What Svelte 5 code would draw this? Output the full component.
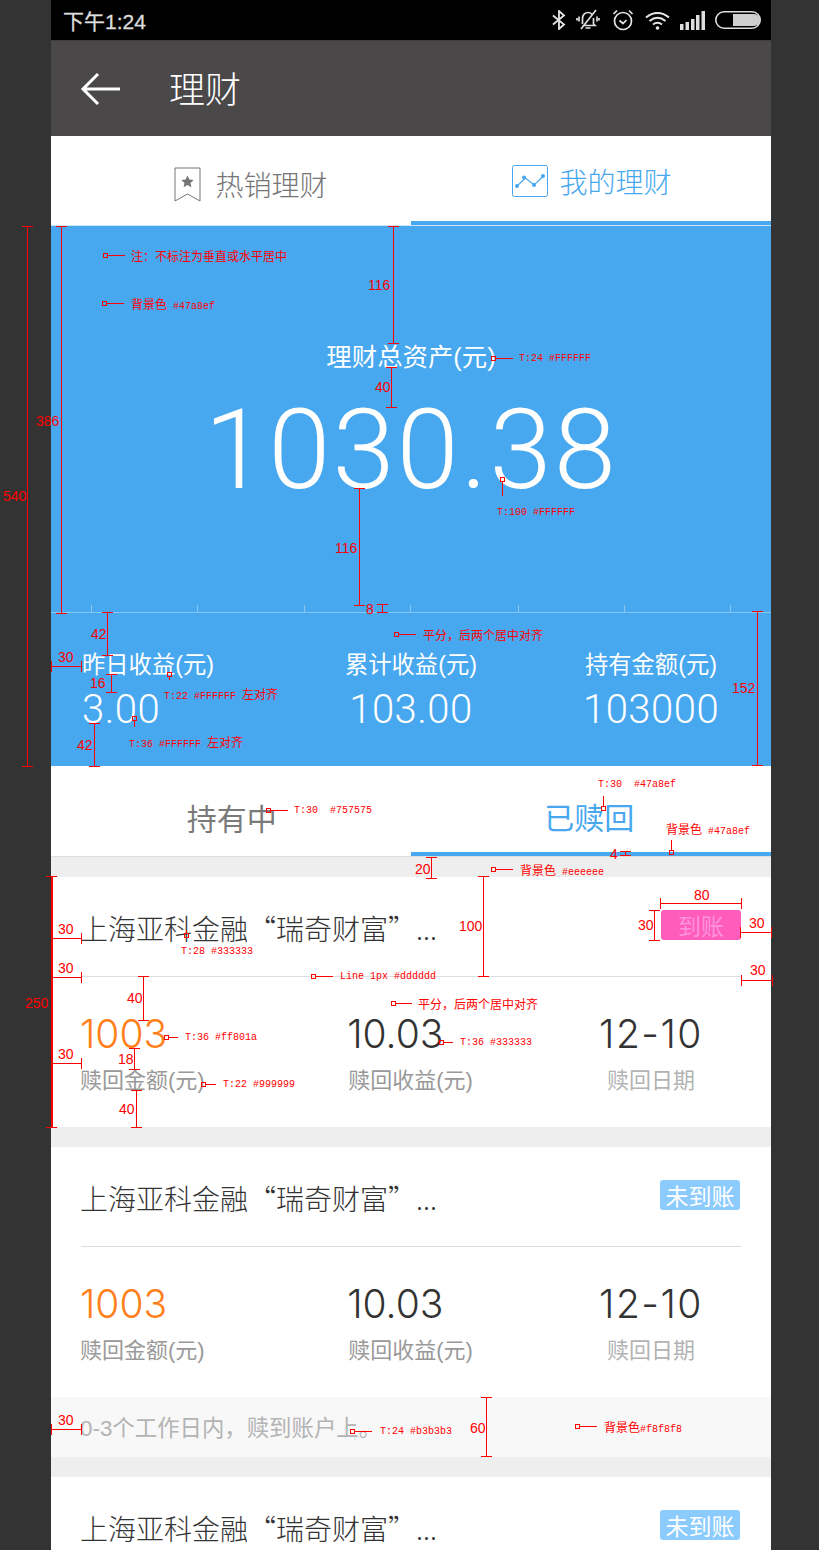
<script>
  const vdims = [
    [27,226,766,'540',3,496],[61,226,613,'386',36,421],[393,226,343,'116',368,285],[391,367,407,'40',375,387],
    [359,488,605,'116',335,548],[382,604,612,'8',366,609],[107,612,655,'42',91,634],[111,674,692,'16',90,683],
    [94,723,766,'42',77,745],[757,611,765,'152',732,688],[625,851,855,'4',610,854],[431,857,878,'20',415,869],
    [483,876,976,'100',459,926],[51,876,1127,'250',25,1003],[654,910,940,'30',638,925],[143,976,1020,'40',127,998],
    [134,1048,1069,'18',118,1059],[136,1090,1127,'40',119,1109],[486,1397,1456,'60',470,1428]
  ];
  const hdims = [
    [51,81,666,'30',58,657],[660,741,903,'80',694,895],[740,771,932,'30',749,923],[741,772,980,'30',750,970],
    [51,81,938,'30',58,929],[51,81,977,'30',58,968],[51,81,1063,'30',58,1054],[51,81,1429,'30',58,1420]
  ];
  // marker x, marker y, leader: [x1,y1,x2,y2], text, text x, text y
  const notes = [
    [105,255,[107,255,125,255],'注：不标注为垂直或水平居中',131,255],
    [104,303,[106,303,124,303],'背景色 #47a8ef',131,303],
    [493,358,[495,358,513,358],'T:24 #FFFFFF',519,358],
    [502,479,[502,481,502,496],'T:100 #FFFFFF',497,512],
    [396,634,[398,634,416,634],'平分，后两个居中对齐',423,634],
    [169,674,[169,676,169,680],'T:22 #FFFFFF 左对齐',164,693],
    [134,718,[134,720,134,727],'T:36 #FFFFFF 左对齐',129,741],
    [268,810,[270,810,288,810],'T:30  #757575',294,810],
    [603,808,[603,796,603,806],'T:30  #47a8ef',598,784],
    [671,852,[671,840,671,850],'背景色 #47a8ef',666,828],
    [493,869,[495,869,513,869],'背景色 #eeeeee',520,869],
    [186,935,[186,930,186,933],'T:28 #333333',181,951],
    [313,976,[315,976,333,976],'Line 1px #dddddd',340,976],
    [393,1003,[395,1003,412,1003],'平分，后两个居中对齐',418,1003],
    [166,1037,[168,1037,178,1037],'T:36 #ff801a',185,1037],
    [441,1042,[443,1042,453,1042],'T:36 #333333',460,1042],
    [203,1084,[205,1084,216,1084],'T:22 #999999',223,1084],
    [352,1431,[354,1431,372,1431],'T:24 #b3b3b3',380,1431],
    [577,1426,[579,1426,597,1426],'背景色#f8f8f8',604,1426]
  ];
  const ticks = [40,146,253,359,467,573,679];
  const stats = [['昨日收益(元)','3.00'],['累计收益(元)','103.00'],['持有金额(元)','103000']];
  const box = (x,y,w,h) => `left:${x}px;top:${y}px;width:${w}px;height:${h}px`;
  const at = (x,y) => `left:${x}px;top:${y-7}px`;
  const atn = (x,y) => `left:${x}px;top:${y-8}px`;
  const parts = (t) => t.split(/([\u4e00-\u9fff，：]+)/).filter(Boolean);
  const isCjk = (t) => /[\u4e00-\u9fff，：]/.test(t);
</script>

<div class="stage">
  <div class="phone">
    <header class="status">
      <span class="time">下午1:24</span>
      <div class="sicons">
        <svg width="14" height="20" viewBox="0 0 14 20" fill="none" stroke="#e6e6e6" stroke-width="1.8"><path d="M1 5.500 12 14.500 7 19V1l5 4.500L1 14.500"/></svg>
        <svg class="bell" width="24" height="22" viewBox="0 0 24 22" fill="none" stroke="#e0e0e0" stroke-width="1.7"><path d="M6.500 15V9.500C6.500 6 9 3.500 12 3.500c1.500 0 3 .6 4 1.700M17.500 9v6l1.500 1.500H6.500M9.500 19h5M3 7.500v5M1 9v2.500M21 7.500v5M23 9v2.500M5 20 20 1"/></svg>
        <svg class="alarm" width="22" height="22" viewBox="0 0 22 22" fill="none" stroke="#e6e6e6" stroke-width="1.7"><circle cx="11" cy="12" r="8.500"/><path d="M7.500 11.500 11 14.500l3.500-3.500M1.500 5 5 1.500M20.500 5 17 1.500"/></svg>
        <svg width="25" height="19" viewBox="0 0 25 19" fill="none" stroke="#e8e8e8" stroke-width="2"><path d="M1 6.500C8 .5 17 .5 24 6.500M4.500 10C9.500 6 15.500 6 20.500 10M8 13.500c3-2.300 6-2.300 9 0"/><circle cx="12.500" cy="17" r="1.800" fill="#e8e8e8" stroke="none"/></svg>
        <svg width="25" height="19" viewBox="0 0 25 19" fill="#dedede"><rect x="0" y="13" width="3.500" height="6"/><rect x="5.500" y="11" width="3.500" height="8"/><rect x="11" y="8" width="3.500" height="11"/><rect x="16" y="4" width="3.500" height="15"/><rect x="21.500" y="0" width="3.500" height="19"/></svg>
        <svg width="46" height="18" viewBox="0 0 46 18" fill="none"><rect x=".8" y=".8" width="44.400" height="16.400" rx="8.200" stroke="#dedede" stroke-width="1.600"/><path d="M18 3h21a6 6 0 0 1 0 12H18z" fill="#cfcfcf"/></svg>
      </div>
    </header>

    <nav class="topbar">
      <svg class="back" width="42" height="34" viewBox="0 0 42 34" fill="none" stroke="#fff" stroke-width="3"><path d="M40 17H3M18 2 3 17l15 15"/></svg>
      <span class="navtitle">理财</span>
    </nav>

    <div class="tabs">
      <div class="tab hot">
        <svg width="27" height="35" viewBox="0 0 27 35" fill="none" stroke="#757575" stroke-width="1"><path d="M1 1h25v33l-12.500-7L1 34z"/><path d="m13.500 8.500 1.900 4 4.300.5-3.200 2.900.9 4.300-3.900-2.200-3.900 2.200.9-4.300L7.300 13l4.300-.5z" fill="#757575" stroke="none"/></svg>
        <span>热销理财</span>
      </div>
      <div class="tab mine">
        <svg width="37" height="33" viewBox="0 0 37 33" fill="none" stroke="#47a8ef"><rect x=".5" y=".5" width="35" height="31" rx="2"/><path d="m5 21 8.500-8 8.500 7 9-8.500" stroke-width="1.200"/><g fill="#47a8ef" stroke="none"><circle cx="5" cy="21" r="2"/><circle cx="12" cy="12.500" r="2"/><circle cx="22" cy="20" r="2"/><circle cx="31" cy="11" r="2"/></g></svg>
        <span>我的理财</span>
      </div>
    </div>

    <section class="hero">
      <p class="herolabel">理财总资产(元)</p>
      <p class="heronum">1030.38</p>
    </section>

    <section class="stats">
      {#each ticks as t}<i class="tick" style="left:{t}px"></i>{/each}
      {#each stats as s, i}
        <div class="stat" class:first={i === 0}>
          <span class="slabel">{s[0]}</span>
          <span class="snum">{s[1]}</span>
        </div>
      {/each}
    </section>

    <div class="subtabs">
      <div class="sub off">持有中</div>
      <div class="sub on">已赎回</div>
    </div>

    <div class="gap"></div>

    <article class="card">
      <div class="cardhead">
        <span class="ctitle">上海亚科金融“瑞奇财富”...</span>
        <span class="badge pink">到账</span>
      </div>
      <div class="cells">
        <div class="cell c1"><b class="orange">1003</b><span>赎回金额(元)</span></div>
        <div class="cell c2"><b>10.03</b><span>赎回收益(元)</span></div>
        <div class="cell c3"><b>12-10</b><span class="lite">赎回日期</span></div>
      </div>
    </article>

    <div class="gap"></div>

    <article class="card">
      <div class="cardhead">
        <span class="ctitle">上海亚科金融“瑞奇财富”...</span>
        <span class="badge sky">未到账</span>
      </div>
      <div class="cells">
        <div class="cell c1"><b class="orange">1003</b><span>赎回金额(元)</span></div>
        <div class="cell c2"><b>10.03</b><span>赎回收益(元)</span></div>
        <div class="cell c3"><b>12-10</b><span class="lite">赎回日期</span></div>
      </div>
    </article>
    <div class="tip">0-3个工作日内，赎到账户上。</div>

    <div class="gap"></div>

    <article class="card">
      <div class="cardhead">
        <span class="ctitle">上海亚科金融“瑞奇财富”...</span>
        <span class="badge sky">未到账</span>
      </div>
    </article>
  </div>

  <div class="marks">
    {#each vdims as d}
      <i class="ln" style={box(d[0],d[1],d[3] === '250' ? 2 : 1,d[2]-d[1])}></i>
      <i class="ln" style={box(d[0]-5,d[1],11,1)}></i>
      <i class="ln" style={box(d[0]-5,d[2],11,1)}></i>
      <span class="num" style={atn(d[4],d[5])}>{d[3]}</span>
    {/each}
    {#each hdims as d}
      <i class="ln" style={box(d[0],d[2],d[1]-d[0],1)}></i>
      <i class="ln" style={box(d[0],d[2]-5,1,11)}></i>
      <i class="ln" style={box(d[1],d[2]-5,1,11)}></i>
      <span class="num" style={atn(d[4],d[5])}>{d[3]}</span>
    {/each}
    {#each notes as n}
      <i class="mk" style={box(n[0]-2,n[1]-2,3,3)}></i>
      <i class="ln" style={box(n[2][0],n[2][1],Math.max(n[2][2]-n[2][0],1),Math.max(n[2][3]-n[2][1],1))}></i>
      <span class="note" style={at(n[4],n[5])}>{#each parts(n[3]) as p}<span class:cjk={isCjk(p)}>{p}</span>{/each}</span>
    {/each}
  </div>
</div>

<style>
  :global(body) { margin: 0; background: #333; }
  .stage {
    position: relative; width: 819px; height: 1550px; overflow: hidden;
    background: #333; padding-left: 51px; box-sizing: border-box;
    font-family: "Liberation Sans", "Noto Sans CJK SC", sans-serif;
  }
  .phone { width: 720px; background: #fff; }
  p { margin: 0; }

  .status { height: 40px; background: #000; display: flex; align-items: center; justify-content: space-between; padding: 0 10px 0 12px; }
  .time { color: #ddd; font-size: 21px; -webkit-text-stroke: .3px #ddd; margin-top: -1px; }
  .sicons { display: flex; align-items: center; gap: 10px; }
  .bell { margin-right: 2px; }
  .alarm { margin-right: 1px; }

  .topbar { height: 96px; background: #4a4849; display: flex; align-items: center; padding-left: 30px; box-sizing: border-box; border-top: 1px solid #3f3d3e; }
  .back { margin-right: 48px; margin-left: -1px; }
  .navtitle { color: #fff; font-size: 36px; font-family: "Noto Sans CJK SC", sans-serif; font-weight: 300; margin: -3px 0 0 -1px; }

  .tabs { display: flex; height: 89px; }
  .tab { flex: 0 0 360px; display: flex; align-items: center; justify-content: center; font-size: 28px; font-family: "Noto Sans CJK SC", sans-serif; font-weight: 300; box-sizing: border-box; }
  .hot { color: #757575; gap: 14px; padding: 7px 0 0 40px; }
  .hot svg { margin-top: 1px; }
  .mine { color: #47a8ef; gap: 10px; border-bottom: 4px solid #47a8ef; padding: 4px 0 0 2px; }
  .mine svg { margin-top: 1px; }

  .hero { background: #47a8ef; border-top: 1px solid #cbe4f9; height: 387px; box-sizing: border-box; color: #fff; text-align: center; padding-top: 114px; }
  .herolabel { font-size: 25.400px; line-height: 34px; }
  .heronum { font-family: Roboto, sans-serif; font-weight: 300; font-size: 112px; line-height: 120px; margin-top: 16px; letter-spacing: 2px; }

  .stats { position: relative; background: #47a8ef; border-top: 1px solid #88c6f4; height: 154px; box-sizing: border-box; display: grid; grid-template-columns: repeat(3, 240px); color: #fff; padding-top: 37px; }
  .tick { position: absolute; top: -8px; width: 1px; height: 7px; background: #88c6f4; }
  .stat { display: flex; flex-direction: column; align-items: center; }
  .stat.first { align-items: flex-start; padding-left: 31px; }
  .slabel { font-size: 23.300px; line-height: 30px; }
  .snum { font-family: Roboto, sans-serif; font-weight: 300; font-size: 40px; line-height: 46px; margin-top: 7px; letter-spacing: .5px; }

  .subtabs { display: flex; height: 91px; box-sizing: border-box; border-bottom: 1px solid #ddd; }
  .sub { flex: 1; height: 90px; box-sizing: border-box; display: flex; align-items: center; justify-content: center; font-size: 30px; }
  .off { color: #7a7a7a; padding: 12px 0 0 2px; }
  .on { color: #47a8ef; border-bottom: 4px solid #47a8ef; padding: 13px 3px 0 0; }

  .gap { height: 20px; background: #eee; }

  .card { background: #fff; padding: 0 30px; }
  .cardhead { height: 99px; display: flex; justify-content: space-between; align-items: center; border-bottom: 1px solid #ddd; }
  .ctitle { font-family: "Noto Sans CJK SC", sans-serif; font-weight: 300; font-size: 28px; color: #333; margin: 2px 0 0 -1px; }
  .badge { width: 80px; height: 30px; border-radius: 3px; display: flex; align-items: center; justify-content: center; }
  .pink { background: #ff5cbb; color: #ff93dc; font-size: 23px; margin-top: -3px; }
  .sky { background: #8ccbfd; color: #fff; font-size: 23px; margin: -3px 1px 0 0; }

  .cells { height: 150px; display: grid; grid-template-columns: 210px 240px 240px; margin-right: -30px; padding-top: 34px; box-sizing: border-box; }
  .cell { display: flex; flex-direction: column; }
  .c1 { align-items: flex-start; }
  .c2 { justify-self: center; align-items: flex-start; }
  .c3 { align-items: center; }
  .cell b { font-family: Inter, sans-serif; font-weight: 300; font-size: 39px; line-height: 46px; color: #333; }
  .c1 b { margin-left: -1px; }
  .c2 b { margin-left: -2px; }
  .c3 b { letter-spacing: 1.500px; }
  .cell b.orange { color: #ff801a; }
  .cell span { font-size: 22px; line-height: 30px; color: #999; margin: 9px 0 0 -1px; }
  .cell span.lite { color: #b3b3b3; margin-left: 0; }

  .tip { height: 60px; background: #f8f8f8; color: #b3b3b3; font-size: 22.400px; line-height: 64px; padding-left: 29px; }

  .marks { position: absolute; inset: 0; pointer-events: none; }
  .ln { position: absolute; background: #f00; }
  .mk { position: absolute; border: 1px solid #f00; }
  .num, .note { position: absolute; color: #f00; line-height: 16px; white-space: pre; }
  .num { font-size: 14px; }
  .note { font-family: "Liberation Mono", "Noto Sans CJK SC", monospace; font-size: 10px; }
  .cjk { font-size: 12px; font-family: "Noto Sans CJK SC", sans-serif; }
</style>
